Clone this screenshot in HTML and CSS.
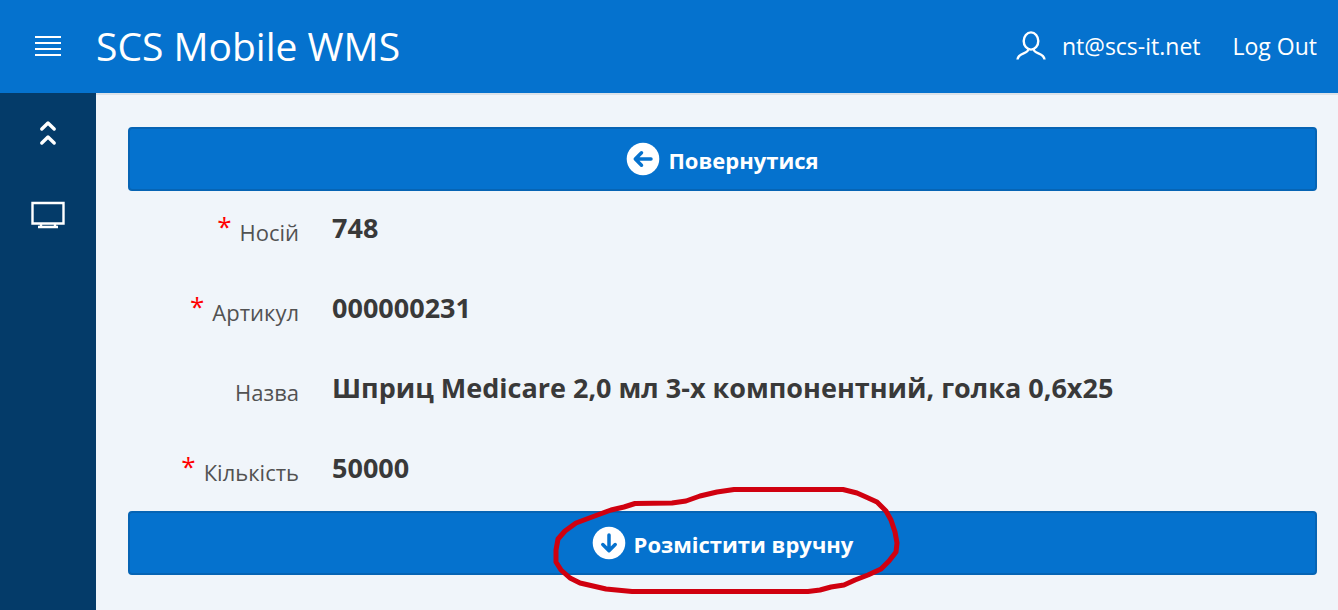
FILE: index.html
```html
<!DOCTYPE html>
<html lang="uk">

<head>
    <meta charset="UTF-8">
    <meta name="viewport" content="width=device-width, initial-scale=1.0">
    <title>SCS Mobile WMS</title>
    <link rel="stylesheet" href="styles.css">
</head>

<body>
    <header class="header">
        <button type="button" class="menu-btn" aria-label="Menu">
            <svg width="26" height="20" viewBox="0 0 26 20" fill="#fff">
                <path d="M0 0h26v2H0zM0 6h26v2H0zM0 12h26v2H0zM0 18h26v2H0z" />
            </svg>
        </button>
        <a href="#" class="logo">SCS Mobile WMS</a>
        <nav class="user-nav">
            <a href="#" class="user">
                <svg width="30" height="30" viewBox="0 0 30 30" fill="none" stroke="#fff" stroke-width="2.4">
                    <ellipse cx="15" cy="10" rx="7.300" ry="8.600" />
                    <path d="M12.500 18c-.5 5.500-10.500 3-11 10.500M17.500 18c.5 5.500 10.500 3 11 10.500" />
                </svg>
                nt@scs-it.net
            </a>
            <a href="#">Log Out</a>
        </nav>
    </header>
    <div class="wrap">
        <nav class="sidebar">
            <a href="#" aria-label="Up">
                <svg width="34" height="28" viewBox="0 0 34 28" fill="none" stroke="#fff" stroke-width="3.4" stroke-linecap="round" stroke-linejoin="round">
                    <path d="M10.800 10l6.200-6 6.200 6M10.800 24l6.200-6 6.200 6" />
                </svg>
            </a>
            <a href="#" aria-label="Desktop">
                <svg width="34" height="28" viewBox="0 0 34 28" fill="none" stroke="#fff" stroke-width="2.4">
                    <path d="M1.500 2h31v20.500h-31zM10 22.500v3M24 22.500v3M7 26h20" />
                </svg>
            </a>
        </nav>
        <main class="content">
            <button type="button" class="btn">
                <svg width="34" height="34" viewBox="0 0 34 34">
                    <circle cx="17" cy="17" r="16.300" fill="#fff" />
                    <path d="M25 17H10M15.500 10.800L9.300 17l6.200 6.200" fill="none" stroke="#0572ce" stroke-width="3.500" stroke-linecap="round" stroke-linejoin="round" />
                </svg>
                <span>Повернутися</span>
            </button>
            <form class="fields">
                <div class="field">
                    <label for="carrier"><span class="required">*</span>Носій</label>
                    <output id="carrier">748</output>
                </div>
                <div class="field">
                    <label for="article"><span class="required">*</span>Артикул</label>
                    <output id="article">000000231</output>
                </div>
                <div class="field">
                    <label for="title">Назва</label>
                    <output id="title">Шприц Medicare 2,0 мл 3-х компонентний, голка 0,6х25</output>
                </div>
                <div class="field">
                    <label for="amount"><span class="required">*</span>Кількість</label>
                    <output id="amount">50000</output>
                </div>
            </form>
            <div class="action">
                <button type="button" class="btn">
                    <svg width="34" height="34" viewBox="0 0 34 34">
                        <circle cx="17" cy="17" r="16.300" fill="#fff" />
                        <path d="M17 9v15M10.800 18.500l6.200 6.200 6.200-6.200" fill="none" stroke="#0572ce" stroke-width="3.500" stroke-linecap="round" stroke-linejoin="round" />
                    </svg>
                    <span>Розмістити вручну</span>
                </button>
                <!-- hand-drawn mark round the button text -->
                <svg class="mark" width="350" height="112" viewBox="550 484 350 112" fill="none" stroke="#d0000f" stroke-width="5" stroke-linejoin="round">
                    <path d="M635 503.500L672 503 686 501 700 496 717 492 734 489.500H843L857 493 866 497 877 502 886 511 891 520 895 532 897 543 896 552 889 561 881 569 868 575 855 580 844 585 831 587 820 590 808 591.500H632L606 589 580 583 570 578 561 570 556 562 556 550 558 539 565 531 576 523 592 517 611 510 624 507z" />
                </svg>
            </div>
        </main>
    </div>
</body>

</html>
```

FILE: styles.css
```css
* {
    box-sizing: border-box;
}

body {
    margin: 0;
    min-height: 100vh;
    display: flex;
    flex-direction: column;
    background: #f0f5fa;
    color: #393939;
    font-family: "Segoe UI", "Open Sans", "Noto Sans", sans-serif;
    font-size: 24px;
}

a {
    color: #fff;
    text-decoration: none;
}

svg {
    display: block;
    flex: none;
}

.header {
    display: flex;
    align-items: center;
    padding: 0 21px 2px 0;
    height: 93px;
    background: #0572ce;
}

.menu-btn {
    display: flex;
    justify-content: center;
    width: 96px;
    padding: 0;
    border: 0;
    background: none;
    cursor: pointer;
}

.logo {
    font-size: 39px;
}

.user-nav {
    display: flex;
    gap: 32px;
    margin-left: auto;
    font-size: 23px;
}

.user {
    display: flex;
    align-items: center;
    gap: 16px;
}

.wrap {
    flex: 1;
    display: flex;
}

.sidebar {
    display: flex;
    flex-direction: column;
    align-items: center;
    gap: 54px;
    width: 96px;
    padding-top: 26px;
    background: #043b69;
}

.content {
    flex: 1;
    padding: 32px 21px 32px 32px;
    border-top: 2px solid #dce2e8;
}

.btn {
    display: flex;
    align-items: center;
    justify-content: center;
    gap: 8px;
    width: 100%;
    height: 64px;
    border: 2px solid #0664b4;
    border-radius: 4px;
    background: #0572ce;
    color: #fff;
    font-family: inherit;
    font-size: 22px;
    font-weight: 700;
    cursor: pointer;
}

.btn span {
    padding-top: 2px;
}

.field {
    display: grid;
    grid-template-columns: 171px 1fr;
    align-items: start;
    column-gap: 33px;
    min-height: 80px;
    padding-top: 17px;
    line-height: 40px;
}

.field label {
    padding-top: 4px;
    color: #525252;
    font-size: 22px;
    text-align: right;
}

.field output {
    font-size: 27px;
    font-weight: 700;
}

.required {
    margin-right: 8px;
    color: #f00;
    font-size: 26px;
    line-height: 1;
    vertical-align: 5px;
}

.action {
    position: relative;
}

.mark {
    position: absolute;
    top: -27px;
    left: 50%;
    margin-left: -173px;
    pointer-events: none;
}
```
